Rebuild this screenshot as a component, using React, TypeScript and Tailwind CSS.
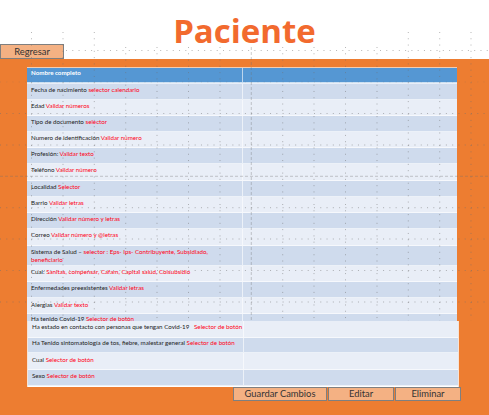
import React from 'react';

type Row = { label: string; hint: string; h: string; leading?: string };

const rows: Row[] = [
  { label: 'Fecha de nacimiento', hint: 'selector calendario', h: 'h-[15.5px]' },
  { label: 'Edad', hint: 'Validar números', h: 'h-[16px]' },
  { label: 'Tipo de documento', hint: 'selector', h: 'h-[16px]' },
  { label: 'Numero de identificación', hint: 'Validar número', h: 'h-[16.5px]' },
  { label: 'Profesión:', hint: 'Validar texto', h: 'h-[16px]' },
  { label: 'Teléfono', hint: 'Validar número', h: 'h-[16.5px]' },
  { label: 'Localidad', hint: 'Selector', h: 'h-[16px]' },
  { label: 'Barrio', hint: 'Validar letras', h: 'h-[16.5px]' },
  { label: 'Dirección', hint: 'Validar número y letras', h: 'h-[16px]' },
  { label: 'Correo', hint: 'Validar número y @letras', h: 'h-[16.5px]' },
  { label: 'Sistema de Salud –', hint: 'selector : Eps- Ips- Contribuyente, Subsidiado, beneficiario', h: 'h-[20px]', leading: 'pt-[2px] leading-[8.4px]' },
  { label: 'Cual:', hint: 'Sanitas, compensar, Cafam, Capital salud, Colsubsidio', h: 'h-[16px]', leading: 'leading-[11.5px]' },
  { label: 'Enfermedades preexistentes', hint: 'Validar letras', h: 'h-[16px]', leading: 'leading-[11px]' },
  { label: 'Alergias', hint: 'Validar texto', h: 'h-[16px]', leading: 'leading-[13px]' },
  { label: 'Ha tenido Covid-19', hint: 'Selector de botón', h: 'h-[16px]', leading: 'leading-[10.5px]' },
];

const lowerRows: Row[] = [
  { label: 'Ha estado en contacto con personas que tengan Covid-19  ', hint: 'Selector de botón', h: 'h-[17px]', leading: 'whitespace-pre leading-[11px]' },
  { label: 'Ha Tenido sintomatología de tos, fiebre, malestar general', hint: 'Selector de botón', h: 'h-[15px]', leading: 'whitespace-nowrap leading-[9.5px]' },
  { label: 'Cual', hint: 'Selector de botón', h: 'h-[17px]', leading: 'whitespace-nowrap leading-[13.5px]' },
  { label: 'Sexo', hint: 'Selector de botón', h: 'h-[16px]', leading: 'whitespace-nowrap leading-[12px]' },
];

const gridX = [31.5, 63, 94.3, 125.7, 157, 188.5, 220, 282.7, 314, 345.5, 377, 408.3, 439.7, 471];
const gridY = [50.5, 82, 113.5, 145, 207.7, 239, 270.5, 302];

const TableRow = ({ row, odd }: { row: Row; odd: boolean }) => (
  <div className={`flex border-b border-white/60 ${row.h} ${odd ? 'bg-[#cfdbed]' : 'bg-[#e9eef7]'}`}>
    <div className={`w-[215.5px] shrink-0 border-r border-white/60 pl-[4px] pr-[6px] text-[6.2px] ${row.leading ?? 'leading-[12px]'} text-[#222]`}>
      {row.label} <span className="text-[#ff0014]">{row.hint}</span>
    </div>
    <div className="flex-1" />
  </div>
);

const ActionButton = ({ label, w }: { label: string; w: string }) => (
  <button className={`${w} h-[14px] border border-[#7f7f7f] bg-[#f4b183] text-[9.4px] leading-[12px] text-[#333]`}>
    {label}
  </button>
);

export default function App() {
  return (
    <div className="relative flex h-[415px] w-[489px] flex-col overflow-hidden bg-white font-['Lato',sans-serif]">
      <h1 className="flex h-[44px] items-center justify-center pt-[16px] font-['Open_Sans',sans-serif] text-[33px] leading-none font-bold text-[#f26a2e]">
        Paciente
      </h1>
      <div className="flex h-[15px]">
        <button className="h-[15px] w-[64px] border border-[#7f7f7f] bg-[#f4b183] text-[9.4px] leading-[12px] text-[#333]">
          Regresar
        </button>
      </div>
      <main className="flex flex-1 flex-col bg-[#ed7d31] pt-[8px] pl-[27px]">
        <div className="h-[254px] w-[430px] overflow-hidden border-t border-[#f4cdb0]">
          <div className="flex h-[15px] border-b border-white/70 bg-[#5597d3]">
            <div className="w-[215.5px] shrink-0 border-r border-white/60 pl-[4px] text-[6.2px] leading-[10px] font-bold text-white">
              Nombre completo
            </div>
            <div className="flex-1" />
          </div>
          <div className="h-[1px] bg-[#e9eef7]" />
          {rows.map((row, i) => (
            <TableRow key={row.label} row={row} odd={i % 2 === 0} />
          ))}
        </div>
        <div className="relative z-20 h-[65.5px] w-[432px] border-r border-l border-[#f6e3d6] bg-white">
          {lowerRows.map((row, i) => (
            <TableRow key={row.label} row={row} odd={i % 2 === 1} />
          ))}
        </div>
        <div className="relative z-20 mt-[0.5px] flex w-[434px] justify-end gap-px">
          <ActionButton label="Guardar Cambios" w="w-[94px]" />
          <ActionButton label="Editar" w="w-[66px]" />
          <ActionButton label="Eliminar" w="w-[66px]" />
        </div>
      </main>
      {/* Guias punteadas de la diapositiva */}
      <svg className="pointer-events-none absolute top-0 left-0 z-10" width="489" height="321" viewBox="0 0 489 321">
        <g stroke="#6f6f6f" strokeOpacity="0.5" strokeWidth="1" fill="none">
          {gridX.map((x) => (
            <line key={x} x1={x} y1={x > 100 && x < 400 ? 47 : 32} x2={x} y2="321" strokeDasharray="1 5.28" />
          ))}
          {gridY.map((y) => (
            <line key={y} x1={y < 60 ? 66 : 0} y1={y} x2="489" y2={y} strokeDasharray="1 5.28" strokeOpacity={y === 82 ? 0.2 : 0.5} />
          ))}
          <line x1="251.3" y1="47" x2="251.3" y2="321" strokeDasharray="3 2" strokeOpacity="0.35" />
          <line x1="0" y1="176.3" x2="489" y2="176.3" strokeDasharray="3 2" strokeOpacity="0.35" />
        </g>
      </svg>
    </div>
  );
}
